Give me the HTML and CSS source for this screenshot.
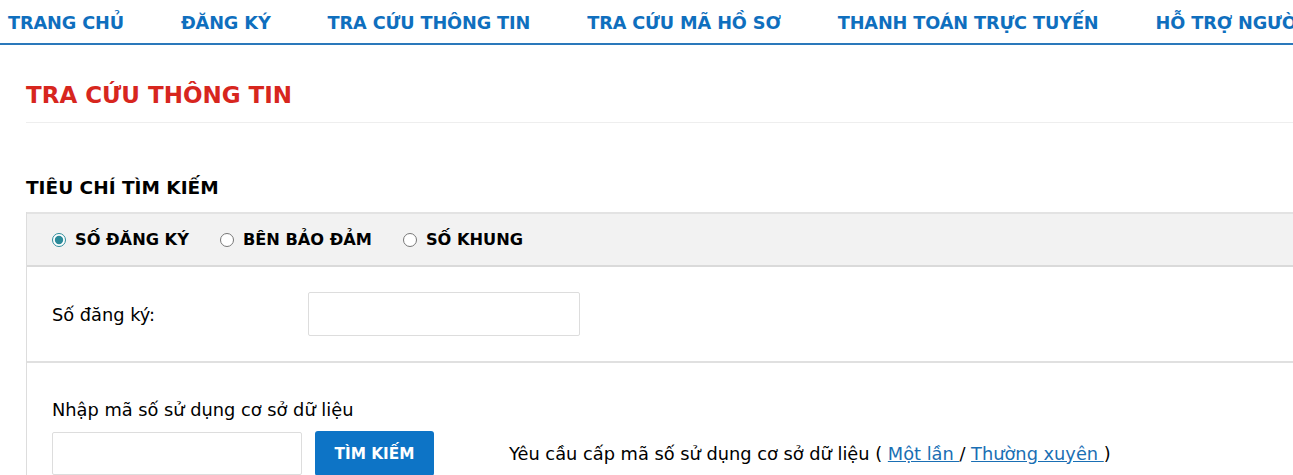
FILE: index.html
```html
<!DOCTYPE html>
<html>

<head>
  <meta charset="UTF-8">
  <meta name="viewport" content="width=device-width, initial-scale=1.0">
  <title>Tra cứu thông tin</title>
  <link rel="stylesheet" href="styles.css">
</head>

<body>
  <nav class="topnav">
    <a class="topnav__item" href="#">TRANG CHỦ</a>
    <a class="topnav__item" href="#">ĐĂNG KÝ</a>
    <a class="topnav__item" href="#">TRA CỨU THÔNG TIN</a>
    <a class="topnav__item" href="#">TRA CỨU MÃ HỒ SƠ</a>
    <a class="topnav__item" href="#">THANH TOÁN TRỰC TUYẾN</a>
    <a class="topnav__item" href="#">HỖ TRỢ NGƯỜI DÙNG</a>
  </nav>

  <main class="content">
    <h1 class="page__title">TRA CỨU THÔNG TIN</h1>

    <h2 class="section__title">TIÊU CHÍ TÌM KIẾM</h2>

    <div class="panel">
      <div class="panel__head">
        <label class="option"><input type="radio" name="kind" checked> SỐ ĐĂNG KÝ</label>
        <label class="option"><input type="radio" name="kind"> BÊN BẢO ĐẢM</label>
        <label class="option"><input type="radio" name="kind"> SỐ KHUNG</label>
      </div>

      <div class="panel__row">
        <label class="field__label">Số đăng ký:</label>
        <input class="field__input" type="text">
      </div>

      <div class="panel__foot">
        <div class="code__label">Nhập mã số sử dụng cơ sở dữ liệu</div>
        <div class="code__line">
          <input class="code__input" type="text">
          <button class="btn">TÌM KIẾM</button>
          <span class="code__note">Yêu cầu cấp mã số sử dụng cơ sở dữ liệu ( <a href="#">Một lần </a>/ <a href="#">Thường xuyên </a>)</span>
        </div>
      </div>
    </div>
  </main>
</body>

</html>
```

FILE: styles.css
```css
* {
  padding: 0;
  margin: 0;
  box-sizing: border-box;
}

body {
  font-family: "DejaVu Sans", sans-serif;
  color: #000;
  background-color: white;
  overflow: hidden;
}

.topnav {
  display: flex;
  height: 45px;
  padding-left: 8px;
  border-bottom: 2px solid #2a78bb;
  white-space: nowrap;
  overflow: hidden;
}

.topnav__item {
  flex: none;
  margin-right: 57px;
  padding-top: 13px;
  font-size: 17.7px;
  font-weight: bold;
  letter-spacing: -0.12px;
  color: #0f6fbe;
  text-decoration: none;
}

.content {
  padding-left: 26px;
}

.page__title {
  margin-top: 37px;
  padding-bottom: 14px;
  border-bottom: 1px solid #eeeeee;
  font-size: 23px;
  color: #d7261e;
}

.section__title {
  margin-top: 54px;
  margin-bottom: 14px;
  font-size: 18.5px;
}

.panel {
  width: 1400px;
  border-left: 1px solid #dddddd;
}

.panel__head {
  display: flex;
  align-items: center;
  height: 55px;
  padding-left: 25px;
  background-color: #f2f2f2;
  border-top: 2px solid #e3e3e3;
  border-bottom: 2px solid #dadada;
}

.option {
  display: flex;
  align-items: center;
  gap: 9px;
  margin-right: 31px;
  font-size: 16.2px;
  font-weight: bold;
}

.option input {
  width: 14px;
  height: 14px;
  margin: 0;
  accent-color: #2b8a99;
}

.panel__row {
  display: flex;
  align-items: center;
  height: 96px;
  padding-left: 25px;
  border-bottom: 2px solid #e0e0e0;
}

.field__label {
  width: 256px;
  font-size: 17.8px;
}

.field__input {
  width: 272px;
  height: 44px;
  border: 1px solid #dddddd;
  border-radius: 2px;
}

.panel__foot {
  padding: 36px 0 0 25px;
}

.code__label {
  font-size: 17.8px;
  margin-bottom: 11px;
}

.code__line {
  display: flex;
  align-items: center;
}

.code__input {
  width: 250px;
  height: 43px;
  border: 1px solid #dddddd;
  border-radius: 2px;
}

.btn {
  width: 119px;
  height: 45px;
  margin-left: 13px;
  border: none;
  border-radius: 3px;
  background-color: #0d74c6;
  color: white;
  font-family: inherit;
  font-size: 15.3px;
  font-weight: bold;
}

.code__note {
  margin-left: 75px;
  font-size: 17.8px;
}

.code__note a {
  color: #1a6fb4;
}
```
